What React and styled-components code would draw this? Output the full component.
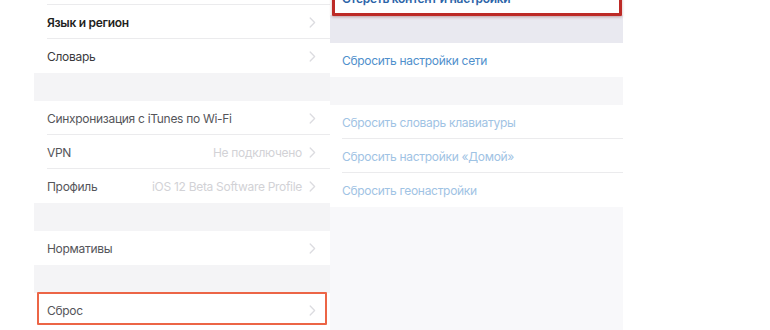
import React from 'react';
import styled, { createGlobalStyle } from 'styled-components';

const GlobalStyle = createGlobalStyle`
  html, body {
    margin: 0;
    padding: 0;
    background: #ffffff;
  }
  body {
    font-family: Inter, "Open Sans", "Liberation Sans", sans-serif;
    -webkit-font-smoothing: antialiased;
  }
`;

const leftGroups = [
  { gap: false, rows: [{ label: '', cut: true }, { label: 'Язык и регион', tone: 'strong' }, { label: 'Словарь', tone: 'dark' }] },
  {
    gap: true,
    rows: [
      { label: 'Синхронизация с iTunes по Wi-Fi', tone: 'mid' },
      { label: 'VPN', value: 'Не подключено', tone: 'mid' },
      { label: 'Профиль', value: 'iOS 12 Beta Software Profile', tone: 'mid' },
    ],
  },
  { gap: true, rows: [{ label: 'Нормативы', tone: 'mid' }] },
  { gap: true, rows: [{ label: 'Сброс', tone: 'mid', mark: true }] },
];

const rightGroups = [
  { shade: 'none', rows: [{ label: 'Стереть контент и настройки', tone: 'strong', cut: true, mark: true }] },
  { shade: 'lilac', rows: [{ label: 'Сбросить настройки сети', tone: 'blue' }] },
  {
    shade: 'soft',
    rows: [
      { label: 'Сбросить словарь клавиатуры', tone: 'pale' },
      { label: 'Сбросить настройки «Домой»', tone: 'pale' },
      { label: 'Сбросить геонастройки', tone: 'pale' },
    ],
  },
];

const textColors = {
  strong: '#1f1f22',
  dark: '#3a3a3d',
  mid: '#55555a',
  blue: '#4f8fcc',
  pale: '#9fc3e4',
};

function Chevron() {
  return (
    <svg width="7" height="11" viewBox="0 0 7 11" fill="none">
      <path d="M1.2 1 L5.6 5.5 L1.2 10" stroke="#dcdce0" strokeWidth="1.3" strokeLinecap="round" strokeLinejoin="round" />
    </svg>
  );
}

function SettingsList() {
  return (
    <LeftPanel>
      {leftGroups.map((group, gi) => (
        <React.Fragment key={gi}>
          {group.gap && <Gap />}
          <Group>
            {group.rows.map((row, ri) => (
              <Row key={ri} $cut={row.cut} $last={ri === group.rows.length - 1} $mark={row.mark}>
                <Label $tone={row.tone}>{row.label}</Label>
                <Trail>
                  {row.value && <Value>{row.value}</Value>}
                  {!row.cut && <Chevron />}
                </Trail>
              </Row>
            ))}
          </Group>
        </React.Fragment>
      ))}
    </LeftPanel>
  );
}

function ResetList() {
  return (
    <RightPanel>
      {rightGroups.map((group, gi) => (
        <React.Fragment key={gi}>
          {gi > 0 && <Gap $shade={group.shade} />}
          <Group>
            {group.rows.map((row, ri) => (
              <ResetRow key={ri} $cut={row.cut} $mark={row.mark} $last={ri === group.rows.length - 1}>
                <Label $tone={row.tone} $bold={row.mark}>{row.label}</Label>
              </ResetRow>
            ))}
          </Group>
        </React.Fragment>
      ))}
      <Tail />
    </RightPanel>
  );
}

export default function App() {
  return (
    <>
      <GlobalStyle />
      <Page>
        <Spacer />
        <SettingsList />
        <ResetList />
      </Page>
    </>
  );
}

const Page = styled.div`
  display: flex;
  width: 770px;
  height: 330px;
  overflow: hidden;
  background: #ffffff;
`;

const Spacer = styled.div`
  width: 34px;
  flex: none;
`;

const LeftPanel = styled.div`
  width: 296px;
  flex: none;
  display: flex;
  flex-direction: column;
  margin-top: -29px;
`;

const RightPanel = styled.div`
  width: 293px;
  flex: none;
  display: flex;
  flex-direction: column;
  margin-top: -19px;
  background: #f7f7f9;
`;

const Group = styled.div`
  background: #ffffff;
  display: flex;
  flex-direction: column;
`;

const Gap = styled.div`
  height: 28px;
  flex: none;
  background: ${({ $shade }) => ($shade === 'lilac' ? '#e9e9f0' : $shade === 'soft' ? '#f6f6f8' : '#f4f4f6')};
`;

const Tail = styled.div`
  flex: 1;
  background: #f8f8fa;
`;

const Row = styled.div`
  position: relative;
  height: 34px;
  flex: none;
  display: flex;
  align-items: center;
  justify-content: space-between;
  padding: 0 14px 0 13px;

  &::after {
    content: '';
    display: ${({ $last }) => ($last ? 'none' : 'block')};
    position: absolute;
    left: 13px;
    right: 0;
    bottom: 0;
    height: 1px;
    background: #ebebed;
  }

  &::before {
    content: '';
    display: ${({ $mark }) => ($mark ? 'block' : 'none')};
    position: absolute;
    left: 3px;
    right: 3px;
    top: -1px;
    bottom: 2px;
    border: 2.5px solid #ec6546;
    border-radius: 1px;
  }
`;

const ResetRow = styled(Row)`
  padding: 0 12px;

  &::after {
    left: 12px;
  }

  &::before {
    left: 2px;
    right: 1px;
    top: 0;
    bottom: -1px;
    border: 3px solid #bd2a26;
    box-shadow: 0 1px 3px rgba(120, 20, 20, 0.35);
  }
`;

const Label = styled.span`
  font-size: 12px;
  font-weight: ${({ $bold, $tone }) => ($bold || $tone === 'strong' ? 600 : 400)};
  color: ${({ $tone, $bold }) => ($bold ? '#2c64a8' : textColors[$tone] || '#333')};
  white-space: nowrap;
  letter-spacing: -0.3px;
`;

const Trail = styled.div`
  display: flex;
  align-items: center;
  gap: 7px;
`;

const Value = styled.span`
  font-size: 12px;
  letter-spacing: -0.3px;
  color: #d2d2d6;
  white-space: nowrap;
`;
